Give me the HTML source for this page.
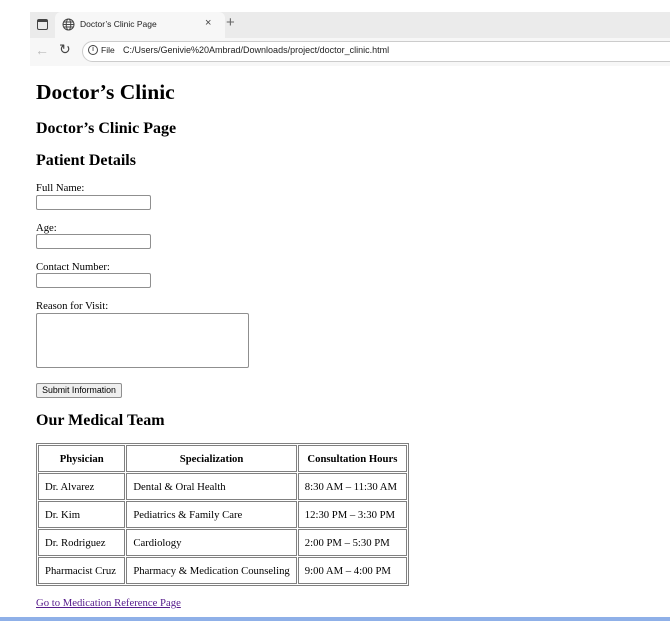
<!DOCTYPE html>
<html><head><meta charset="utf-8">
<style>
*{margin:0;padding:0;box-sizing:border-box}
body{width:670px;height:621px;background:#fff;position:relative;overflow:hidden;font-family:"Liberation Serif",serif;color:#000}
.a{position:absolute;white-space:nowrap}
.ui{font-family:"Liberation Sans",sans-serif}
.inp{position:absolute;border:1px solid #8f8f8f;border-radius:2px;background:#fff}
table{border-collapse:separate;border-spacing:1px;border:1px solid #808080;font-size:10.7px}
td,th{border:1px solid #808080;padding:0 6px;height:27px;text-align:left}
th{text-align:center}
</style></head><body>
<div class="a" style="left:30px;top:12px;width:640px;height:26px;background:#ebebeb"></div>
<div class="a" style="left:55px;top:12px;width:170px;height:28px;background:#f7f7f7;border-radius:6px 6px 0 0"></div>
<div class="a" style="left:37px;top:19px;width:11px;height:11px;border:1.3px solid #444;border-radius:2px;border-top-width:3px"></div>
<svg class="a" style="left:62px;top:18px" width="13" height="13" viewBox="0 0 13 13"><g fill="none" stroke="#444" stroke-width="1"><circle cx="6.5" cy="6.5" r="5.5"/><ellipse cx="6.5" cy="6.5" rx="2.3" ry="5.5"/><path d="M1 6.5h11M2 4h9M2 9h9"/></g></svg>
<div class="a ui" style="left:80px;top:19px;font-size:8.5px;color:#222">Doctor’s Clinic Page</div>
<div class="a ui" style="left:205px;top:17px;font-size:11px;color:#444">×</div>
<div class="a ui" style="left:226px;top:14px;font-size:15px;color:#666">+</div>
<div class="a" style="left:30px;top:38px;width:640px;height:28px;background:#f7f7f7"></div>
<div class="a ui" style="left:35px;top:42px;font-size:14px;color:#bbb">←</div>
<div class="a ui" style="left:59px;top:41px;font-size:14px;color:#444">↻</div>
<div class="a" style="left:82px;top:41px;width:600px;height:21px;border:1px solid #ccc;border-radius:11px;background:#fff"></div>
<div class="a ui" style="left:88px;top:45px;width:10px;height:10px;border:1px solid #444;border-radius:50%;font-size:7px;line-height:8px;text-align:center">i</div>
<div class="a ui" style="left:101px;top:45px;font-size:8.5px;color:#222">File</div>
<div class="a ui" style="left:123px;top:45px;font-size:9px;color:#222">C:/Users/Genivie%20Ambrad/Downloads/project/doctor_clinic.html</div>
<div class="a" style="left:36px;top:80px;font-size:21.5px;font-weight:bold">Doctor’s Clinic</div>
<div class="a" style="left:36px;top:120px;font-size:16px;font-weight:bold">Doctor’s Clinic Page</div>
<div class="a" style="left:36px;top:152px;font-size:16px;font-weight:bold">Patient Details</div>
<div class="a" style="left:36px;top:182px;font-size:10.7px">Full Name:</div>
<div class="inp" style="left:36px;top:195px;width:115px;height:15px"></div>
<div class="a" style="left:36px;top:222px;font-size:10.7px">Age:</div>
<div class="inp" style="left:36px;top:234px;width:115px;height:15px"></div>
<div class="a" style="left:36px;top:261px;font-size:10.7px">Contact Number:</div>
<div class="inp" style="left:36px;top:273px;width:115px;height:15px"></div>
<div class="a" style="left:36px;top:300px;font-size:10.7px">Reason for Visit:</div>
<div class="inp" style="left:36px;top:313px;width:213px;height:55px"></div>
<div class="a ui" style="left:36px;top:383px;width:86px;height:15px;border:1px solid #8f8f8f;border-radius:2px;background:#efefef;font-size:8.8px;line-height:13px;text-align:center">Submit Information</div>
<div class="a" style="left:36px;top:412px;font-size:16px;font-weight:bold">Our Medical Team</div>
<div class="a" style="left:36px;top:443px">
<table style="width:373px">
<tr><th style="width:88px">Physician</th><th>Specialization</th><th style="width:110px">Consultation Hours</th></tr>
<tr><td>Dr. Alvarez</td><td>Dental &amp; Oral Health</td><td>8:30 AM – 11:30 AM</td></tr>
<tr><td>Dr. Kim</td><td>Pediatrics &amp; Family Care</td><td>12:30 PM – 3:30 PM</td></tr>
<tr><td>Dr. Rodriguez</td><td>Cardiology</td><td>2:00 PM – 5:30 PM</td></tr>
<tr><td>Pharmacist Cruz</td><td>Pharmacy &amp; Medication Counseling</td><td>9:00 AM – 4:00 PM</td></tr>
</table></div>
<div class="a" style="left:36px;top:597px;font-size:10.7px;color:#551a8b;text-decoration:underline">Go to Medication Reference Page</div>
<div class="a" style="left:0;top:617px;width:670px;height:4px;background:#8fb0e8"></div>
</body></html>
